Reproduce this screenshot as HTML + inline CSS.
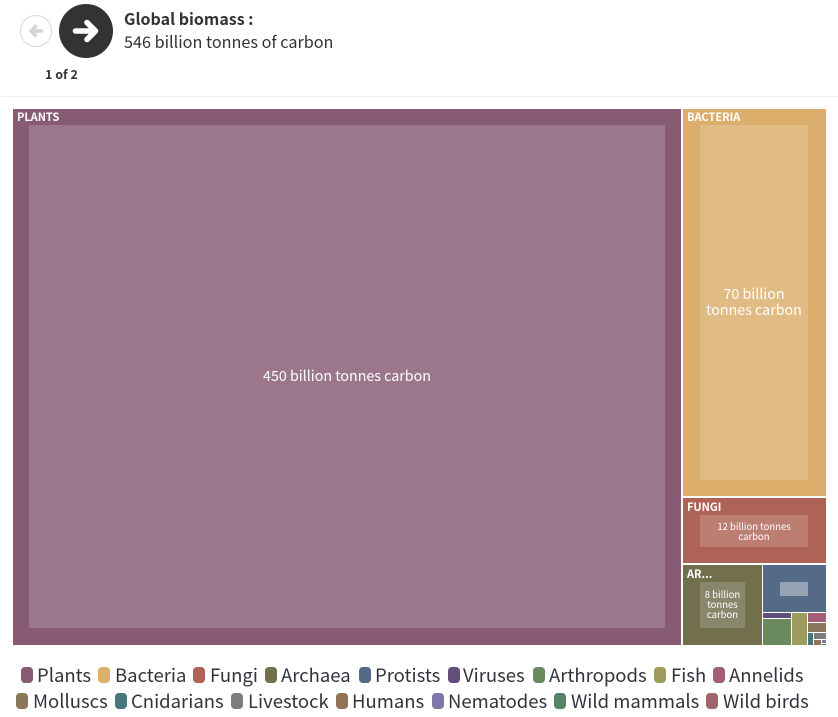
<!DOCTYPE html>
<html><head><meta charset="utf-8">
<style>
html,body{margin:0;padding:0;background:#fff}
body{width:838px;height:717px;position:relative;overflow:hidden;font-family:"Noto Sans CJK JP","Liberation Sans",sans-serif;color:#333}
.a{position:absolute}
.t{position:absolute;white-space:nowrap;line-height:1}
.lab{position:absolute;color:#fff;font-weight:700;font-size:11px;line-height:1;white-space:nowrap}
.in{position:absolute;background:rgba(255,255,255,.17);color:#fff;display:flex;align-items:center;justify-content:center;text-align:center}
.sw{position:absolute;width:12px;height:16px;border-radius:4px}
.lg{position:absolute;font-size:18.500px;line-height:1;white-space:nowrap;color:#33333c}
</style></head>
<body>
<div class="a" style="left:20px;top:15px;width:30px;height:30px;border:1px solid #d8d8d8;border-radius:50%;background:#fff"></div>
<svg class="a" style="left:28px;top:23px" width="16" height="16" viewBox="0 0 16 16"><path d="M13.500 8H3.500M7.500 3.500L3 8l4.500 4.500" fill="none" stroke="#d4d4d4" stroke-width="3.600" stroke-linecap="round" stroke-linejoin="round"/></svg>
<div class="a" style="left:59px;top:4px;width:54px;height:54px;border-radius:50%;background:#333"></div>
<svg class="a" style="left:72px;top:17px" width="28" height="28" viewBox="0 0 28 28"><path d="M3.500 14H22.500M15 5.500L23.500 14L15 22.500" fill="none" stroke="#fff" stroke-width="5.600" stroke-linecap="round" stroke-linejoin="round"/></svg>
<div class="t" style="left:45px;top:68px;font-size:12.500px;font-weight:700">1 of 2</div>
<div class="t" style="left:124px;top:10px;font-size:16px;font-weight:700">Global biomass :</div>
<div class="t" style="left:124px;top:33px;font-size:16.200px">546 billion tonnes of carbon</div>
<div class="a" style="left:1px;top:96px;width:837px;height:1px;background:#eee"></div>

<div class="a" style="left:13px;top:109px;width:668px;height:536px;background:#885b74"></div>
<div class="lab" style="left:17px;top:112px">PLANTS</div>
<div class="in" style="left:29px;top:125px;width:636px;height:503px;font-size:14.250px"><span style="position:relative;top:-1px">450 billion tonnes carbon</span></div>

<div class="a" style="left:683px;top:109px;width:143px;height:387px;background:#dbae6c"></div>
<div class="lab" style="left:687px;top:112px">BACTERIA</div>
<div class="in" style="left:700px;top:125px;width:108px;height:355px;font-size:14.250px;line-height:16px"><span style="position:relative;top:-1px">70 billion<br>tonnes carbon</span></div>

<div class="a" style="left:683px;top:498px;width:143px;height:65px;background:#af6356"></div>
<div class="lab" style="left:687px;top:502px">FUNGI</div>
<div class="in" style="left:700px;top:515px;width:108px;height:32px;font-size:9.500px;line-height:10px">12 billion tonnes<br>carbon</div>

<div class="a" style="left:683px;top:565px;width:79px;height:80px;background:#726f4d"></div>
<div class="lab" style="left:687px;top:569px">AR...</div>
<div class="in" style="left:700px;top:582px;width:45px;height:46px;font-size:9.500px;line-height:10px"><span style="position:relative;top:-1px">8 billion<br>tonnes<br>carbon</span></div>

<div class="a" style="left:763px;top:565px;width:63px;height:47px;background:#546a86"></div>
<div class="a" style="left:780px;top:582px;width:28px;height:14px;background:rgba(255,255,255,.38)"></div>
<div class="a" style="left:763px;top:613px;width:28px;height:5px;background:#614f7a"></div>
<div class="a" style="left:763px;top:619px;width:28px;height:26px;background:#6a8a5e"></div>
<div class="a" style="left:792px;top:613px;width:15px;height:32px;background:#9d9c5e"></div>
<div class="a" style="left:808px;top:613px;width:18px;height:9px;background:#a25f78"></div>
<div class="a" style="left:808px;top:623px;width:18px;height:9px;background:#8b775c"></div>
<div class="a" style="left:808px;top:633px;width:5px;height:12px;background:#47767c"></div>
<div class="a" style="left:814px;top:633px;width:12px;height:6px;background:#7d7d7d"></div>
<div class="a" style="left:814px;top:640px;width:7px;height:5px;background:#8f7352"></div>
<div class="a" style="left:822px;top:640px;width:4px;height:3px;background:#7c77a6"></div>
<div class="a" style="left:822px;top:644px;width:4px;height:1px;background:#538466"></div>

<div class="sw" style="left:21px;top:667px;background:#885b74"></div><div class="lg" style="left:37px;top:666px">Plants</div>
<div class="sw" style="left:98px;top:667px;background:#dbae6c"></div><div class="lg" style="left:115px;top:666px">Bacteria</div>
<div class="sw" style="left:193px;top:667px;background:#af6356"></div><div class="lg" style="left:210px;top:666px">Fungi</div>
<div class="sw" style="left:265px;top:667px;background:#726f4d"></div><div class="lg" style="left:281px;top:666px">Archaea</div>
<div class="sw" style="left:359px;top:667px;background:#546a86"></div><div class="lg" style="left:375px;top:666px">Protists</div>
<div class="sw" style="left:448px;top:667px;background:#614f7a"></div><div class="lg" style="left:463px;top:666px">Viruses</div>
<div class="sw" style="left:533px;top:667px;background:#6a8a5e"></div><div class="lg" style="left:549px;top:666px">Arthropods</div>
<div class="sw" style="left:654px;top:667px;background:#9d9c5e"></div><div class="lg" style="left:671px;top:666px">Fish</div>
<div class="sw" style="left:713px;top:667px;background:#a25f78"></div><div class="lg" style="left:729px;top:666px">Annelids</div>

<div class="sw" style="left:16px;top:693px;background:#8b775c"></div><div class="lg" style="left:33px;top:692px">Molluscs</div>
<div class="sw" style="left:115px;top:693px;background:#47767c"></div><div class="lg" style="left:131px;top:692px">Cnidarians</div>
<div class="sw" style="left:231px;top:693px;background:#7d7d7d"></div><div class="lg" style="left:248px;top:692px">Livestock</div>
<div class="sw" style="left:336px;top:693px;background:#8f7352"></div><div class="lg" style="left:352px;top:692px">Humans</div>
<div class="sw" style="left:432px;top:693px;background:#7c77a6"></div><div class="lg" style="left:448px;top:692px">Nematodes</div>
<div class="sw" style="left:554px;top:693px;background:#538466"></div><div class="lg" style="left:571px;top:692px">Wild mammals</div>
<div class="sw" style="left:706px;top:693px;background:#a0646c"></div><div class="lg" style="left:723px;top:692px">Wild birds</div>
</body></html>
